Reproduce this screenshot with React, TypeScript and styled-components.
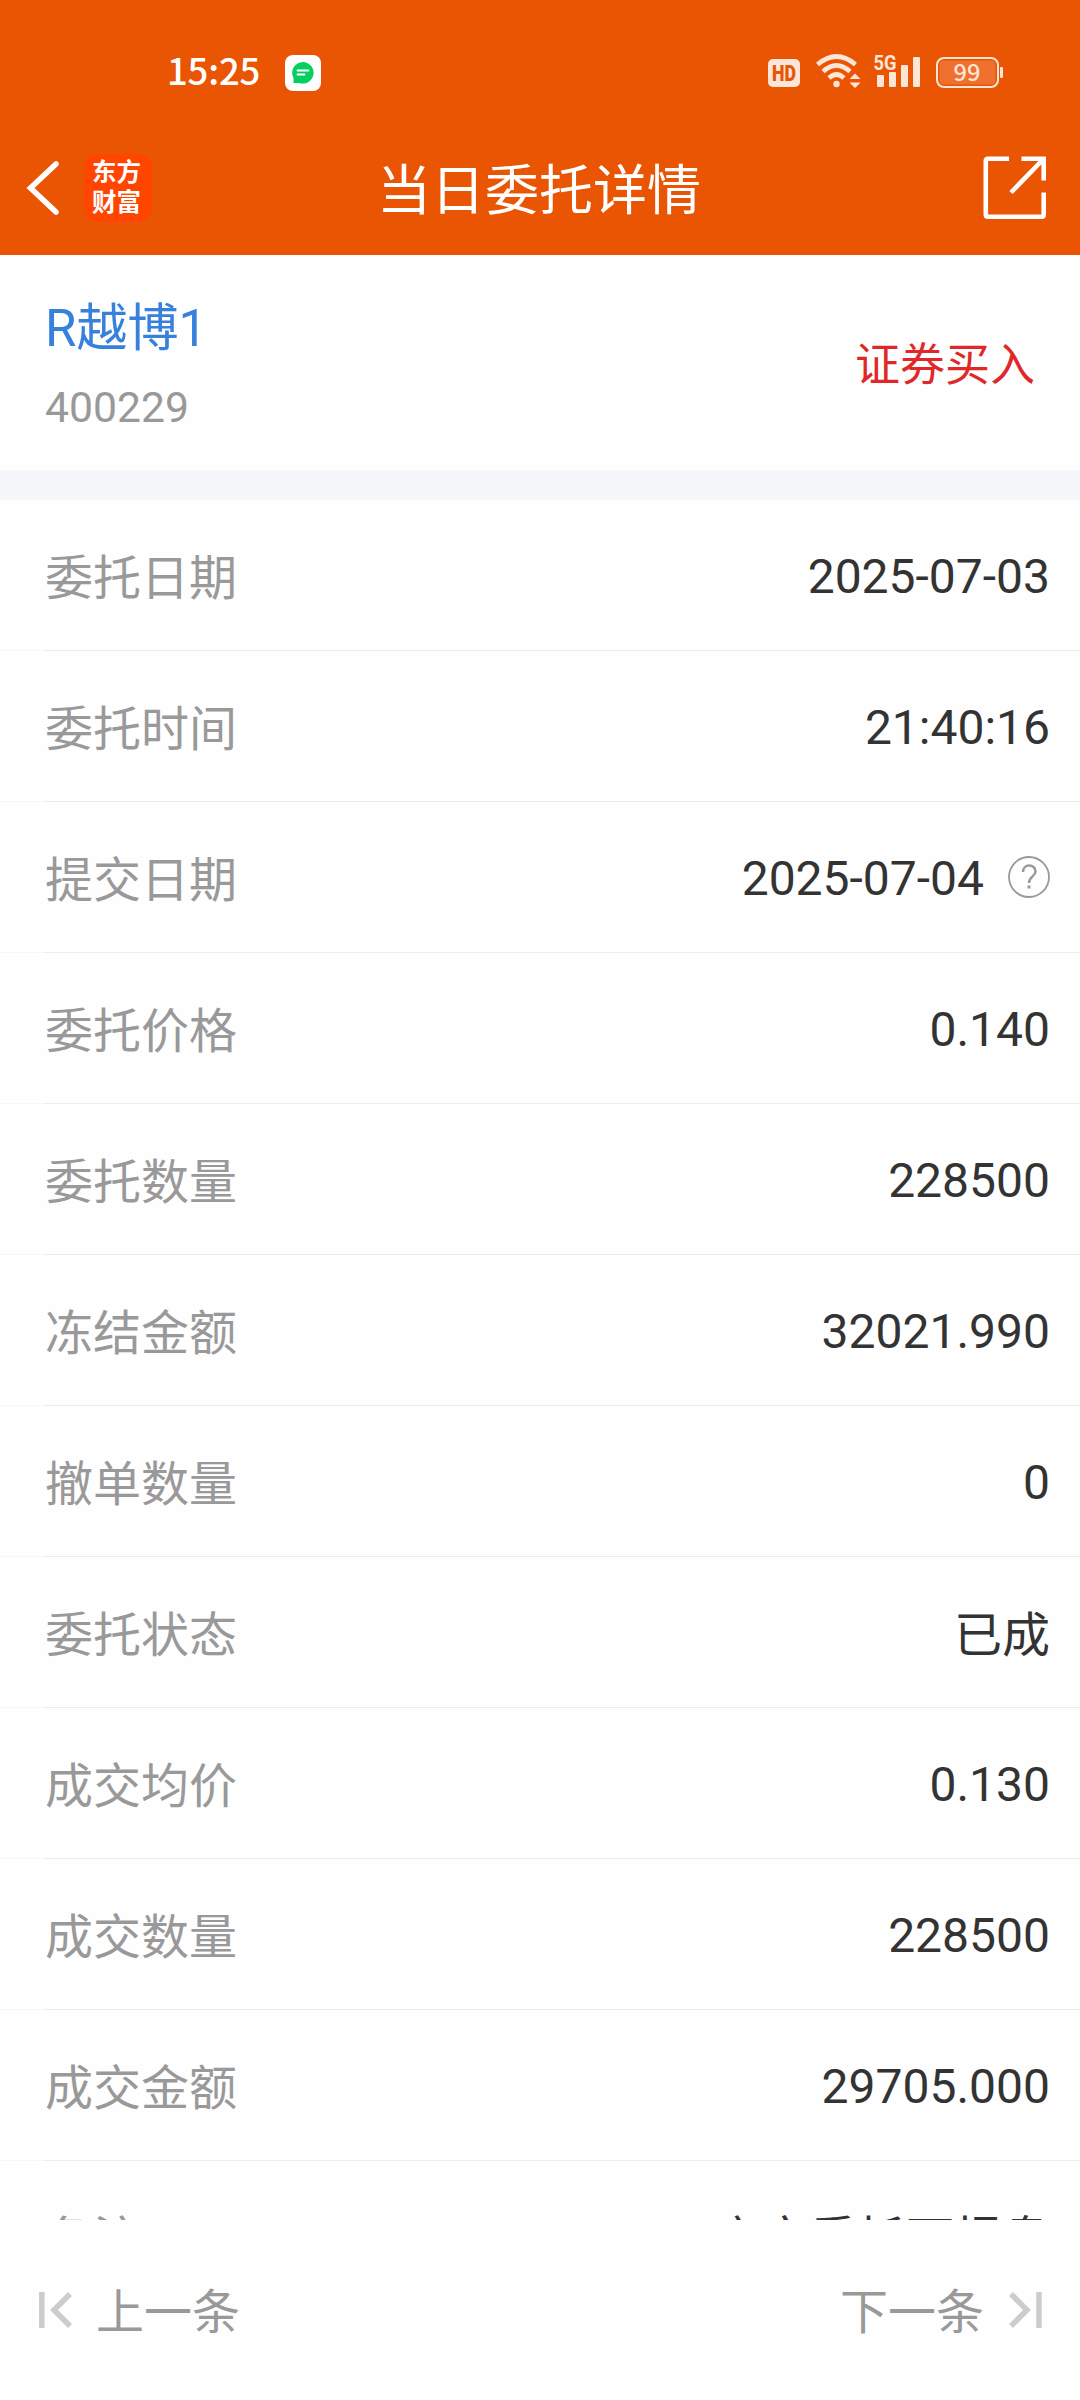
import React from "react";
import styled, { createGlobalStyle } from "styled-components";

const Global = createGlobalStyle`
  body { margin: 0; background: #fefefe; }
  * { box-sizing: border-box; }
`;

const Screen = styled.div`
  width: 1080px;
  height: 2400px;
  display: flex;
  flex-direction: column;
  overflow: hidden;
  background: #fefefe;
  font-family: Roboto, "Noto Sans CJK SC", sans-serif;
`;

const Header = styled.header`
  height: 255px;
  flex: none;
  background: #ea5504;
  color: #fff;
`;

const StatusBar = styled.div`
  height: 122px;
  padding: 24px 76px 0 167px;
  display: flex;
  align-items: center;
  justify-content: space-between;
`;

const StatusGroup = styled.div`
  display: flex;
  align-items: center;
`;

const Clock = styled.span`
  width: 118px;
  padding-bottom: 6px;
  font: 500 36.5px/48px "Noto Sans CJK SC", sans-serif;
  letter-spacing: -0.2px;
  white-space: nowrap;
`;

const TitleBar = styled.div`
  height: 131px;
  padding: 0 32px 0 26px;
  display: grid;
  grid-template-columns: 1fr auto 1fr;
  align-items: center;
`;

const TitleLeft = styled.div`
  display: flex;
  align-items: center;
  gap: 24px;
`;

const Title = styled.h1`
  margin: 0;
  padding: 8px 0 0 4px;
  font-size: 54px;
  font-weight: 400;
  line-height: 80px;
`;

const TitleRight = styled.div`
  display: flex;
  justify-content: flex-end;
`;

const AppLogo = styled.div`
  width: 68px;
  height: 68px;
  padding: 2px 3px 0 0;
  display: flex;
  flex-direction: column;
  align-items: center;
  border-radius: 14px;
  background: #ff4500;
  font: 700 24.5px/30px "Noto Sans CJK SC", sans-serif;
`;

const Stock = styled.section`
  height: 215px;
  flex: none;
  padding: 6px 45px 0;
  display: flex;
  align-items: center;
  justify-content: space-between;
`;

const StockName = styled.div`
  font-size: 51px;
  line-height: 76px;
  color: #3781dc;
`;

const StockCode = styled.div`
  margin-top: 7px;
  font-size: 42.7px;
  line-height: 66px;
  color: #999;
`;

const Side = styled.div`
  font-size: 45px;
  line-height: 66px;
  color: #e02828;
`;

const Divider = styled.div`
  height: 30px;
  flex: none;
  background: #f6f7fa;
`;

const List = styled.main`
  height: 1720px;
  flex: none;
  overflow: hidden;
`;

const Row = styled.div`
  height: 151px;
  padding: 3px 30px 0 45px;
  display: flex;
  align-items: center;
  justify-content: space-between;
  font-size: 48px;
  line-height: 72px;
  background: linear-gradient(to right, #f7f7f7 45px, #ebebeb 45px) bottom / 100% 1px no-repeat;
`;

const Label = styled.span`
  padding-top: 4px;
  color: #999;
`;

const Value = styled.span<{ $cjk?: boolean }>`
  display: flex;
  align-items: center;
  gap: 24px;
  padding-top: ${(p) => (p.$cjk ? 4 : 0)}px;
  color: #333;
`;

const Footer = styled.footer`
  flex: 1;
  padding: 0 37px 0 38px;
  display: flex;
  align-items: center;
  justify-content: space-between;
`;

const PageButton = styled.button<{ $gap: number }>`
  display: flex;
  align-items: center;
  gap: ${(p) => p.$gap}px;
  padding: 0;
  border: 0;
  background: none;
  color: #999;
  font: 400 48px/72px "Noto Sans CJK SC", sans-serif;
`;

const PageText = styled.span`
  padding-bottom: 4px;
`;

const Icon = styled.svg<{ $lift?: number }>`
  display: block;
  flex: none;
  margin-bottom: ${(p) => p.$lift ?? 0}px;
`;

const tint = "#fde5d8";

const MessageIcon = () => (
  <Icon width="36" height="36" viewBox="0 0 36 36">
    <rect width="36" height="36" rx="8" fill="#fff" />
    <path d="M18 7a11 10.8 0 1 1-4 21H8.500V23A11 10.800 0 0 1 18 7Z" fill="#05cf60" />
    <path d="M12.500 15.500h11M12.500 19.500h7" stroke="#fff" strokeWidth="1.800" strokeLinecap="round" />
  </Icon>
);

const StatusIcons = () => (
  <Icon width="236" height="36" viewBox="0 0 236 36" fill={tint} $lift={4}>
    <rect x="0" y="6" width="32" height="28" rx="5" />
    <text x="16" y="28" textAnchor="middle" textLength="24" lengthAdjust="spacingAndGlyphs" fontFamily="Roboto, sans-serif" fontSize="22" fontWeight="900" fill="#ea5504">HD</text>
    <g fill="none" stroke={tint} strokeWidth="4.600">
      <path d="M49.500 11.500Q68.500-4.500 87.500 11.500" />
      <path d="M55 18.500Q68.500 6.500 82 18.500" />
      <path d="M61 25Q68.500 18 76 25" />
    </g>
    <circle cx="68.500" cy="31" r="3.200" />
    <path d="M81.500 26 87 20.500 92.500 26ZM81.500 29.500H92.500L87 35Z" />
    <text x="105.500" y="17" textLength="23" lengthAdjust="spacingAndGlyphs" fontFamily="Roboto, sans-serif" fontSize="20.500" fontWeight="700">5G</text>
    <rect x="109" y="22" width="7" height="12" rx="1" />
    <rect x="121" y="19" width="7" height="15" rx="1" />
    <rect x="133" y="12" width="7" height="22" rx="1" />
    <rect x="145" y="4" width="7" height="30" rx="1" />
    <rect x="169" y="5" width="61" height="29" rx="7" fill="none" stroke={tint} strokeWidth="2" />
    <rect x="171.500" y="7.500" width="56" height="24" rx="4" fill="#f0702e" />
    <rect x="232" y="14" width="3" height="11" rx="1" />
    <text x="199" y="28" textAnchor="middle" textLength="27" lengthAdjust="spacingAndGlyphs" fontFamily="Noto Sans CJK SC, sans-serif" fontSize="23" fontWeight="500">99</text>
  </Icon>
);

const BackIcon = () => (
  <Icon width="34" height="56" viewBox="0 0 34 56" fill="none" stroke="#fff" strokeWidth="5.500" strokeLinecap="round">
    <path d="M30 4 4.500 28 30 52" />
  </Icon>
);

const ShareIcon = () => (
  <Icon width="65" height="64" viewBox="0 0 65 64" fill="none" stroke="#fff" strokeWidth="4.600">
    <path d="M26 2.800H5Q2.800 2.800 2.800 5V58.500Q2.800 60.700 5 60.700H58.500Q60.700 60.700 60.700 58.500V36.500" />
    <path d="M38.500 2.800H60.700V24.500M60 3.500 28 36.500" />
  </Icon>
);

const HelpIcon = () => (
  <Icon width="42" height="42" viewBox="0 0 42 42" $lift={4}>
    <circle cx="21" cy="21" r="20" fill="none" stroke="#999" strokeWidth="1.800" />
    <path d="M15 16C15 7.500 27.500 7.500 27.500 15.500C27.500 20.500 21 20.500 21 27" fill="none" stroke="#999" strokeWidth="2.500" />
    <rect x="19.500" y="29.500" width="3" height="3" fill="#999" />
  </Icon>
);

const FirstIcon = () => (
  <Icon width="35" height="36" viewBox="0 0 35 36" fill="none" stroke="#ccc" strokeWidth="5.500">
    <path d="M3.800 0V36M32 2 16 18 32 34" />
  </Icon>
);

const LastIcon = () => (
  <Icon width="35" height="36" viewBox="0 0 35 36" fill="none" stroke="#ccc" strokeWidth="5.500">
    <path d="M31 0V36M3 2 19 18 3 34" />
  </Icon>
);

const rows: { label: string; value: string; help?: boolean; cjk?: boolean }[] = [
  { label: "委托日期", value: "2025-07-03" },
  { label: "委托时间", value: "21:40:16" },
  { label: "提交日期", value: "2025-07-04", help: true },
  { label: "委托价格", value: "0.140" },
  { label: "委托数量", value: "228500" },
  { label: "冻结金额", value: "32021.990" },
  { label: "撤单数量", value: "0" },
  { label: "委托状态", value: "已成", cjk: true },
  { label: "成交均价", value: "0.130" },
  { label: "成交数量", value: "228500" },
  { label: "成交金额", value: "29705.000" },
  { label: "备注", value: "夜市委托可报盘", cjk: true },
];

export default function App() {
  return (
    <Screen lang="zh-CN">
      <Global />
      <Header>
        <StatusBar>
          <StatusGroup>
            <Clock>15:25</Clock>
            <MessageIcon />
          </StatusGroup>
          <StatusIcons />
        </StatusBar>
        <TitleBar>
          <TitleLeft>
            <BackIcon />
            <AppLogo>
              <span>东方</span>
              <span>财富</span>
            </AppLogo>
          </TitleLeft>
          <Title>当日委托详情</Title>
          <TitleRight>
            <ShareIcon />
          </TitleRight>
        </TitleBar>
      </Header>
      <Stock>
        <div>
          <StockName>R越博1</StockName>
          <StockCode>400229</StockCode>
        </div>
        <Side>证券买入</Side>
      </Stock>
      <Divider />
      <List>
        {rows.map((row) => (
          <Row key={row.label}>
            <Label>{row.label}</Label>
            <Value $cjk={row.cjk}>
              {row.value}
              {row.help && <HelpIcon />}
            </Value>
          </Row>
        ))}
      </List>
      <Footer>
        <PageButton $gap={23}>
          <FirstIcon />
          <PageText>上一条</PageText>
        </PageButton>
        <PageButton $gap={24}>
          <PageText>下一条</PageText>
          <LastIcon />
        </PageButton>
      </Footer>
    </Screen>
  );
}
